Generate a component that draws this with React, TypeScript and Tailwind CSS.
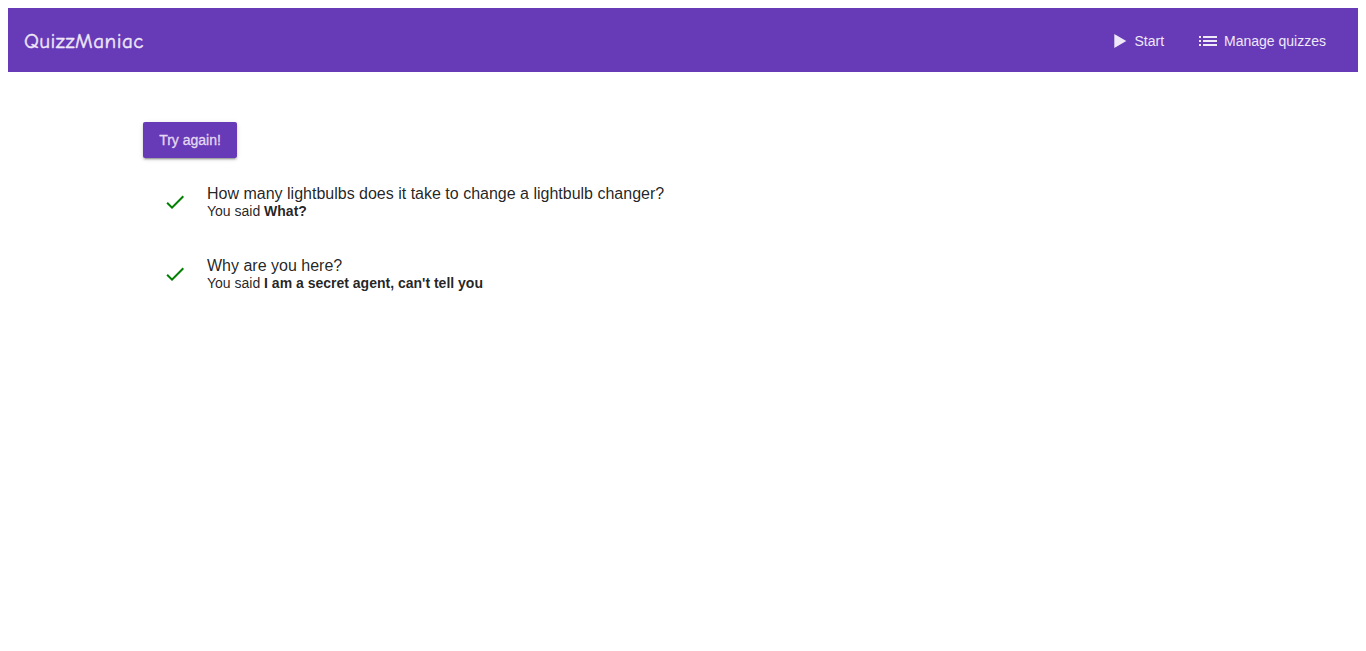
import React from "react";

const answers = [
  { question: "How many lightbulbs does it take to change a lightbulb changer?", answer: "What?" },
  { question: "Why are you here?", answer: "I am a secret agent, can't tell you" },
];

function Icon({ d, className = "" }: { d: string; className?: string }) {
  return (
    <svg viewBox="0 0 24 24" className={`size-6 shrink-0 fill-current ${className}`}>
      <path d={d} />
    </svg>
  );
}

export default function App() {
  return (
    <div className="min-h-[651px] bg-white p-2 font-['Liberation_Sans',Arial,sans-serif] text-black/87">
      <header className="flex h-16 items-center bg-[#673ab7] px-4 pt-0.5 text-[#efe8f8]">
        <span className="font-['Comic_Sans_MS','Comic_Neue',Lato,sans-serif] text-[21px] leading-8 tracking-[0.5px] [-webkit-text-stroke:0.4px_#efe8f8]">QuizzManiac</span>
        <nav className="ml-auto flex items-center text-sm">
          <a className="flex h-9 items-center px-4">
            <Icon d="M6.3 5v14l12-7z" />
            <span className="ml-0.5">Start</span>
          </a>
          <a className="flex h-9 items-center px-4">
            <Icon d="M3 13h2v-2H3v2zm0 4h2v-2H3v2zm0-8h2V7H3v2zm4 4h14v-2H7v2zm0 4h14v-2H7v2zM7 7v2h14V7H7z" />
            <span className="ml-1">Manage quizzes</span>
          </a>
        </nav>
      </header>
      <main className="ml-[135px] pt-[50px]">
        <button className="h-9 w-[94px] rounded-[2px] bg-[#673ab7] text-sm text-[#e4d9f2] [-webkit-text-stroke:0.3px_#e4d9f2] shadow-[0_3px_1px_-2px_rgba(0,0,0,0.2),0_2px_2px_0_rgba(0,0,0,0.14),0_1px_5px_0_rgba(0,0,0,0.12)]">Try again!</button>
        <ul className="pt-2">
          {answers.map((item) => (
            <li key={item.question} className="flex h-18 items-center gap-5 pl-5">
              <Icon className="text-[#008000]" d="M9 16.17L4.83 12l-1.42 1.41L9 19 21 7l-1.41-1.41z" />
              <div>
                <p className="pt-px text-base leading-[18px]">{item.question}</p>
                <p className="text-sm leading-[17px]">You said <b>{item.answer}</b></p>
              </div>
            </li>
          ))}
        </ul>
      </main>
    </div>
  );
}
